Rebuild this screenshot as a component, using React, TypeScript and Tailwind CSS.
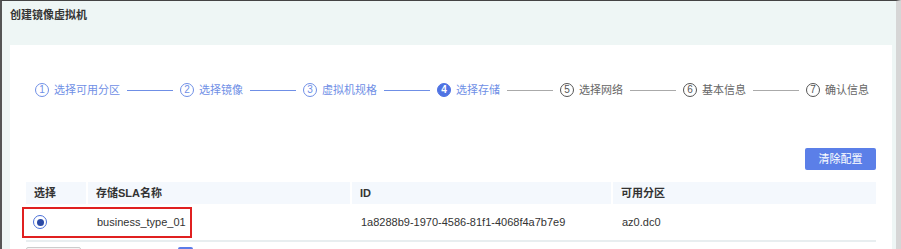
import React from 'react';

type Step = { n: number; label: string; state: 'done' | 'active' | 'todo' };

const steps: Step[] = [
  { n: 1, label: '选择可用分区', state: 'done' },
  { n: 2, label: '选择镜像', state: 'done' },
  { n: 3, label: '虚拟机规格', state: 'done' },
  { n: 4, label: '选择存储', state: 'active' },
  { n: 5, label: '选择网络', state: 'todo' },
  { n: 6, label: '基本信息', state: 'todo' },
  { n: 7, label: '确认信息', state: 'todo' },
];

function StepItem({ step }: { step: Step }) {
  const circle =
    step.state === 'active'
      ? 'bg-[#4f73e3] border-[#4f73e3] text-white font-bold'
      : step.state === 'done'
        ? 'border-[#6f8fe6] text-[#6f8fe6]'
        : 'border-[#555] text-[#555]';
  const text = step.state === 'todo' ? 'text-[#666]' : 'text-[#6f8fe6]';
  return (
    <div className="flex shrink-0 items-center whitespace-nowrap">
      <span
        className={`flex h-[14px] w-[14px] items-center justify-center rounded-full border text-[10px] leading-none ${circle}`}
      >
        {step.n}
      </span>
      <span className={`ml-[5px] text-[11px] leading-[14px] ${text}`}>{step.label}</span>
    </div>
  );
}

export default function App() {
  return (
    <div className="h-[249px] w-[901px] overflow-hidden border-t border-l-2 border-r-[5px] border-t-[#444] border-l-[#555] border-r-[#d6d6d6] bg-[#eef6f5] font-['Liberation_Sans','Noto_Sans_CJK_SC',sans-serif] text-[#333]">
      <div className="h-[44px] pl-[8px] pt-[7px] text-[11px] font-bold leading-[14px]">创建镜像虚拟机</div>

      <div className="ml-[8px] mr-[4px] h-[220px] bg-white px-[16px]">
        <div className="flex items-center pl-[9px] pt-[38px]">
          {steps.map((s, i) => (
            <React.Fragment key={s.n}>
              <StepItem step={s} />
              {i < steps.length - 1 && (
                <span
                  className={`mx-[7px] h-px w-[46px] shrink-0 ${i < 3 ? 'bg-[#6f8fe6]' : 'bg-[#aaa]'}`}
                />
              )}
            </React.Fragment>
          ))}
        </div>

        <div className="mt-[51px] flex justify-end">
          <button className="h-[22px] w-[71px] rounded-[2px] bg-[#5b7fe8] text-[11px] text-white">清除配置</button>
        </div>

        <div className="relative mt-[12px]">
          <div className="flex h-[22px] bg-[#f4f8fd] text-[11px] font-bold">
            <div className="flex w-[62px] items-center border-r-2 border-white pl-[8px]">选择</div>
            <div className="flex w-[264px] items-center border-r-2 border-white pl-[8px]">存储SLA名称</div>
            <div className="flex w-[261px] items-center border-r-2 border-white pl-[8px]">ID</div>
            <div className="flex flex-1 items-center pl-[8px]">可用分区</div>
          </div>
          <div className="flex h-[38px] border-b-2 border-[#e8eef0] text-[11px]">
            <div className="flex w-[62px] items-center pl-[7px]">
              <span className="flex h-[14px] w-[14px] items-center justify-center rounded-full border border-[#4a6fd8]">
                <span className="h-[7px] w-[7px] rounded-full bg-[#2b4aa6]" />
              </span>
            </div>
            <div className="flex w-[264px] items-center pl-[9px]">business_type_01</div>
            <div className="flex w-[261px] items-center pl-[9px]">1a8288b9-1970-4586-81f1-4068f4a7b7e9</div>
            <div className="flex flex-1 items-center pl-[9px]">az0.dc0</div>
          </div>
          <div className="absolute left-[-4px] top-[25px] h-[31px] w-[170px] border-2 border-[#e02020]" />

          <div className="mt-[5px] flex items-start">
            <div className="h-[20px] w-[55px] rounded-[2px] border border-[#ccc] bg-[#f5f5f5]" />
            <div className="ml-[97px] h-[16px] w-[15px] rounded-[2px] bg-[#5b7be8]" />
          </div>
        </div>
      </div>
    </div>
  );
}
